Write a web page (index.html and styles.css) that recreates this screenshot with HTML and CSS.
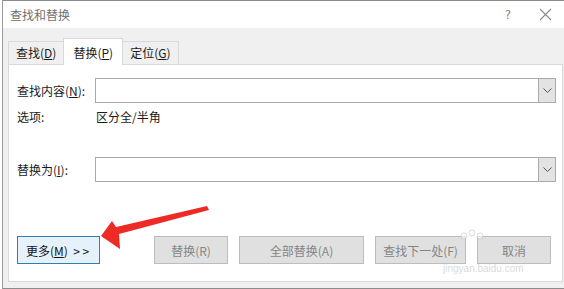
FILE: index.html
```html
<!DOCTYPE html>
<html lang="zh-CN">
<head>
    <meta charset="UTF-8">
    <title>查找和替换</title>
    <link rel="stylesheet" href="styles.css">
</head>
<body>

<div class="window">
    <div class="titlebar">
        <span class="title">查找和替换</span>
        <span class="title-btn help">?</span>
        <span class="title-btn close">
            <svg width="13" height="13" viewBox="0 0 13 13"><path d="M1 1 L12 12 M12 1 L1 12" stroke="#8a8a8a" stroke-width="1.1" fill="none"/></svg>
        </span>
    </div>

    <div class="tabs">
        <div class="tab">查找(<u>D</u>)</div>
        <div class="tab selected">替换(<u>P</u>)</div>
        <div class="tab">定位(<u>G</u>)</div>
    </div>

    <div class="panel">
        <div class="row">
            <label class="label">查找内容(<u>N</u>):</label>
            <div class="combo">
                <div class="combo-field"></div>
                <div class="combo-btn">
                    <svg width="9" height="5" viewBox="0 0 9 5"><path d="M0.5 0.5 L4.5 4.5 L8.5 0.5" stroke="#555" stroke-width="1" fill="none"/></svg>
                </div>
            </div>
        </div>
        <div class="row options">
            <span class="label">选项:</span>
            <span class="option-text">区分全/半角</span>
        </div>
        <div class="row replace">
            <label class="label">替换为(<u>I</u>):</label>
            <div class="combo">
                <div class="combo-field"></div>
                <div class="combo-btn">
                    <svg width="9" height="5" viewBox="0 0 9 5"><path d="M0.5 0.5 L4.5 4.5 L8.5 0.5" stroke="#555" stroke-width="1" fill="none"/></svg>
                </div>
            </div>
        </div>

        <div class="buttons">
            <button class="btn more">更多(<u>M</u>) &nbsp;&gt; &gt;</button>
            <button class="btn disabled w-replace">替换(R)</button>
            <button class="btn disabled w-all">全部替换(A)</button>
            <button class="btn disabled w-next">查找下一处(F)</button>
            <button class="btn disabled w-cancel">取消</button>
        </div>
    </div>

    <!-- 标注箭头 -->
    <svg class="arrow" width="564" height="289" viewBox="0 0 564 289">
        <polygon points="100,236 111,221 115,227 206,206 208,210 118,234 119,249" fill="#ee2a24"/>
        <g fill="rgba(255,255,255,0.55)" stroke="rgba(170,170,170,0.5)" stroke-width="0.8">
            <circle cx="463" cy="236" r="3"/>
            <circle cx="471" cy="233" r="3"/>
            <circle cx="479" cy="236" r="3"/>
        </g>
    </svg>

    <div class="watermark">jingyan.baidu.com</div>
</div>

</body>
</html>
```

FILE: styles.css
```css
body {
    margin: 0;
    background: #ffffff;
    font-family: "Noto Sans CJK SC", "Noto Sans", sans-serif;
    font-size: 12px;
    color: #1a1a1a;
}
.window {
    position: relative;
    margin-left: 2px;
    height: 287px;
    border-top: 1px solid #8c8c8c;
    border-left: 1px solid #9a9a9a;
    border-bottom: 1px solid #8c8c8c;
    background: #f0f0f0;
    overflow: hidden;
}
.titlebar {
    display: flex;
    align-items: center;
    height: 27px;
    background: #ffffff;
    padding-left: 7px;
}
.title {
    color: #6f6f6f;
    font-size: 12px;
    flex: 1;
}
.title-btn {
    color: #8a8a8a;
    font-family: "DejaVu Sans", sans-serif;
}
.help {
    font-size: 12px;
    margin-right: 28px;
}
.close {
    display: flex;
    margin-right: 12px;
}
.tabs {
    display: flex;
    align-items: flex-end;
    height: 36px;
    padding-left: 5px;
}
.tab {
    height: 22px;
    line-height: 22px;
    padding: 0 7px;
    border: 1px solid #d9d9d9;
    border-bottom: none;
    background: #f0f0f0;
    margin-right: -1px;
}
.tab.selected {
    height: 26px;
    line-height: 28px;
    background: #ffffff;
    padding: 0 9px;
    position: relative;
    z-index: 1;
    margin-bottom: -1px;
}
.panel {
    margin-left: 5px;
    width: 539px;
    height: 203px;
    background: #ffffff;
    border: 1px solid #d9d9d9;
    padding: 13px 6px 0 8px;
}
.row {
    display: flex;
    align-items: center;
}
.label {
    width: 78px;
}
.combo {
    display: flex;
    flex: 1;
    height: 25px;
    border: 1px solid #a9a9a9;
    box-sizing: border-box;
}
.combo-field {
    flex: 1;
}
.combo-btn {
    width: 16px;
    display: flex;
    align-items: center;
    justify-content: center;
    background: #e3e3e3;
    border-left: 1px solid #a9a9a9;
}
.options {
    margin-top: 5px;
    height: 16px;
}
.option-text {
    margin-left: 1px;
}
.replace {
    margin-top: 33px;
}
.buttons {
    display: flex;
    margin-top: 54px;
}
.btn {
    height: 28px;
    font-family: "Noto Sans CJK SC", "Noto Sans", sans-serif;
    font-size: 12px;
    border: 1px solid #bdbdbd;
    background: #e0e0e0;
    color: #858585;
    padding: 0;
    margin-right: 11px;
}
.btn.more {
    width: 83px;
    background: #e5f1fb;
    border-color: #2f7fb0;
    color: #111;
    text-align: left;
    padding-left: 8px;
    margin-right: 54px;
}
.w-replace {
    width: 74px;
}
.w-all {
    width: 125px;
}
.w-next {
    width: 91px;
}
.w-cancel {
    width: 74px;
    margin-right: 0;
}
.arrow {
    position: absolute;
    left: -2px;
    top: -1px;
}
.watermark {
    position: absolute;
    left: 440px;
    top: 262px;
    font-family: "Liberation Sans", sans-serif;
    font-size: 10px;
    line-height: 12px;
    color: rgba(200, 200, 200, 0.7);
}
```
